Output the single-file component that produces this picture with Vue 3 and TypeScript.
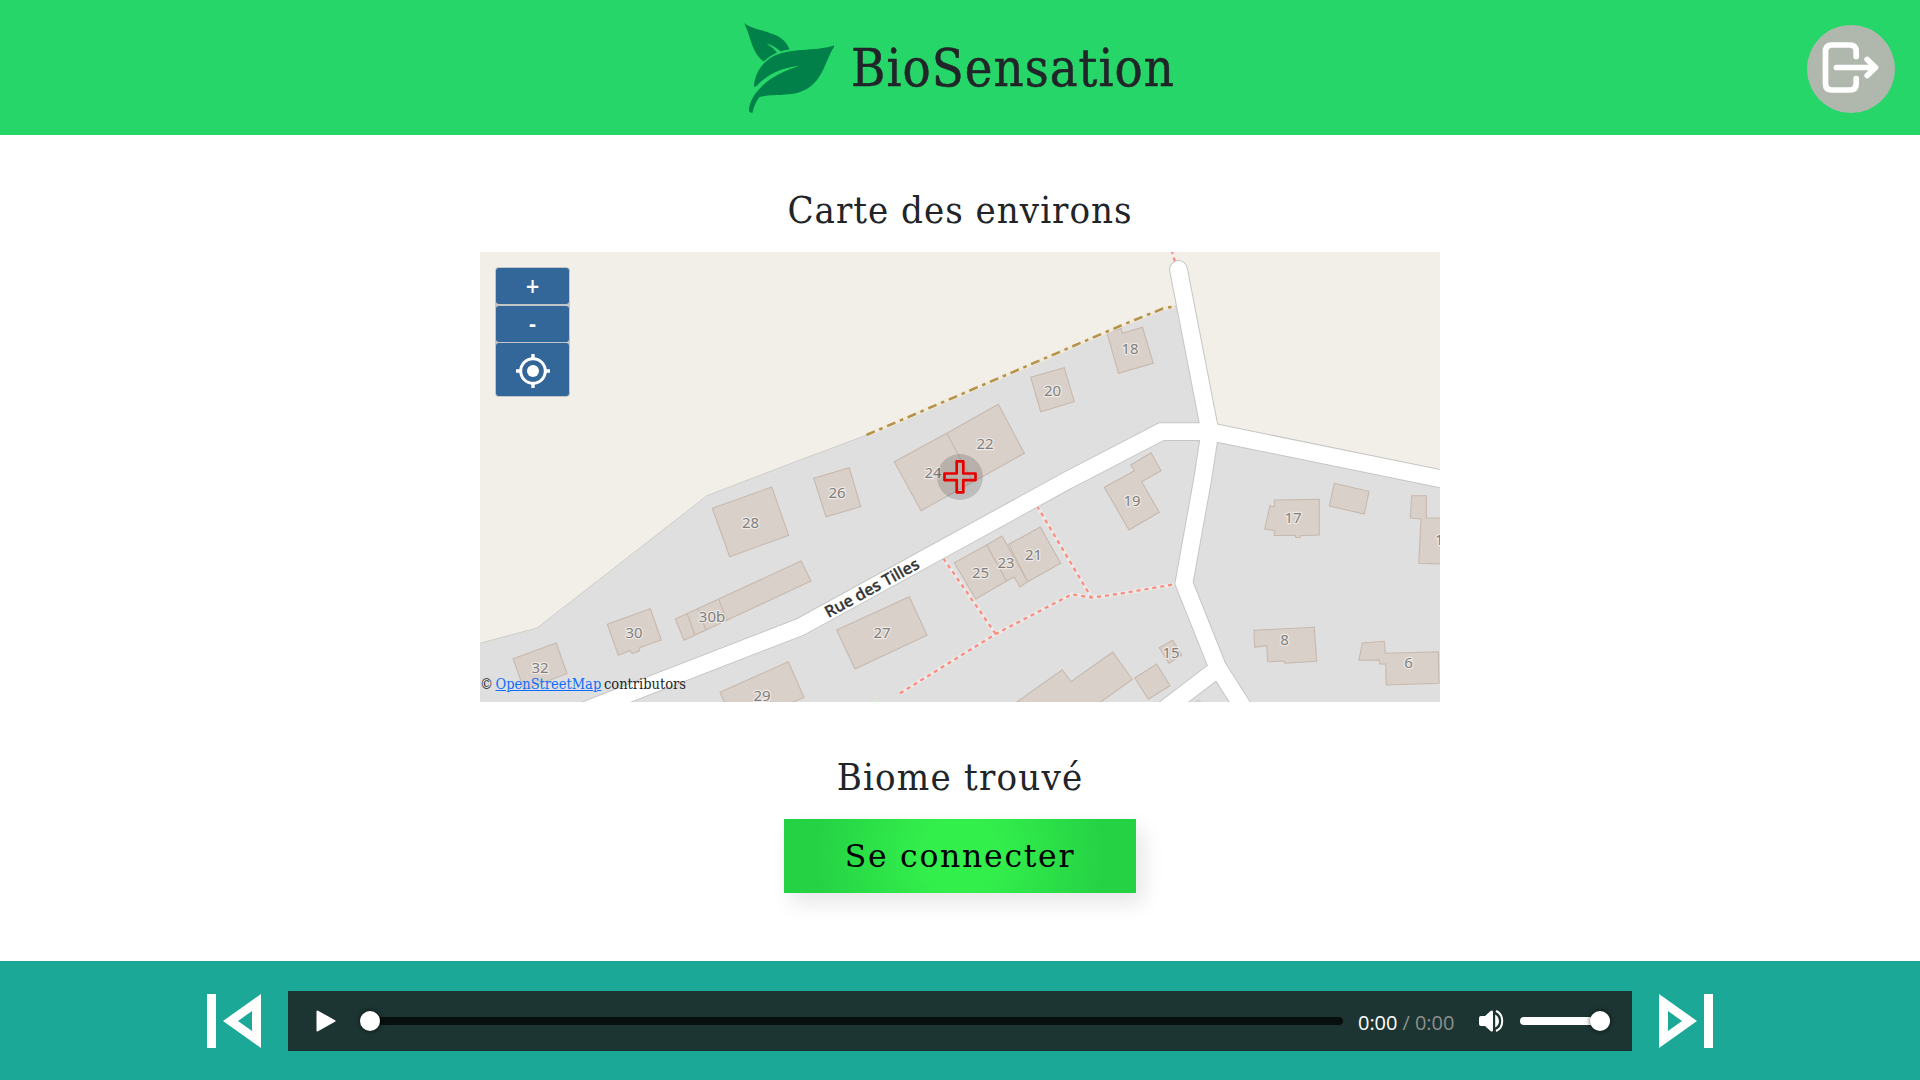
<script setup lang="ts">
interface Label {
  text: string
  x: number
  y: number
}

const buildings: string[] = [
  '1107,333 1121,328.5 1122.5,333.3 1142.5,327.3 1153.3,363.3 1118.5,373.3',
  '1030.7,377.3 1064.3,367.7 1074.3,401.7 1040.7,411.7',
  '894.3,461.7 946.7,433.3 998.3,404.3 1024.3,453.3 921,510.7',
  '813.7,478.3 849.3,467.7 860.7,506.7 826,516.7',
  '712.3,508.3 771.7,487 788.7,535.3 729.7,556.7',
  '607.3,624.3 650.3,608.7 661.3,640 640,647.5 639,651 632.5,653.7 629.5,650.7 618.3,655.3',
  '675.3,619 801,561 811,581 684,640.3',
  '513,658.7 556.3,643 567,673.7 524,689.5',
  '720,692.3 788.3,661.7 804,697.5 788,704 725,704',
  '836.7,630 909.3,596.7 927,635.3 855,669',
  '954.3,562.7 986.7,545 1006.7,581 975.7,599',
  '986.7,545 1002,536 1027.7,581.7 1020,587 1014,577 1006.7,581',
  '1008.7,544.3 1040.3,527 1060.7,563.3 1027.7,581.7',
  '1104.3,487.3 1134.5,470.7 1130.7,465 1151,452.7 1161,470.7 1141.7,481.7 1159.3,512.3 1129,530',
  '1274.3,500 1319.3,499.3 1319.3,535 1300,535.7 1300,537.5 1296,537.5 1295,535.5 1274.3,535.5 1274.3,530.7 1264.7,529 1270,505.7 1274.3,506.7',
  '1334.3,483.3 1369,491.3 1364.3,514 1329.3,506',
  '1411.7,495.7 1426.3,495.7 1426.3,518 1445,518 1445,564 1418.7,563.3 1421,519 1410.3,518',
  '1254,630.3 1314.3,627.3 1316.7,661.3 1285,663.3 1284,661 1267.7,661.7 1266.7,645.7 1254.7,647.3',
  '1362.3,643 1384.3,641.3 1385.3,653.3 1438.3,651.7 1439,683.3 1386.3,685 1385.7,664 1379.7,664 1379,660 1359,660.3',
  '1159.3,647.7 1172.7,640.3 1181.7,655 1169,663.3',
  '1134.7,678 1156.7,664 1170,685.7 1148.3,699.3',
  '1014,704 1062.3,669.7 1071,681.7 1112.7,652 1132.3,679.3 1098,704',
]

const walls = 'M946.7 433.3L973 482M687.3 614L695 635.5M698 609L706 630.5M718.7 599.5L727 620.5'

const roads =
  'M1178.5 269.5L1210 431.7L1202.5 480L1184 583L1217.5 667L1246 712' +
  'M1216 670L1161 712M581 712L800 627L1068.3 480L1161.3 431.7H1210L1450 480.7'

const footpaths =
  'M943.3 558.3L995.7 634M900 693.3L995.7 634L1071.7 594.3L1091.7 597.7L1120 593.7L1174.3 584.3' +
  'M1037 506L1091 597M1171.5 250L1175 262'

const labels: Label[] = [
  { text: '18', x: 1130, y: 354 },
  { text: '20', x: 1052.5, y: 395.5 },
  { text: '22', x: 985, y: 449 },
  { text: '24', x: 933, y: 477.5 },
  { text: '26', x: 837, y: 498 },
  { text: '28', x: 750.5, y: 528 },
  { text: '30', x: 634, y: 638 },
  { text: '30b', x: 712, y: 622 },
  { text: '32', x: 540, y: 672.5 },
  { text: '29', x: 762, y: 700.5 },
  { text: '27', x: 882, y: 638 },
  { text: '25', x: 980.5, y: 578 },
  { text: '23', x: 1006, y: 567.5 },
  { text: '21', x: 1033.5, y: 560 },
  { text: '19', x: 1132, y: 505.5 },
  { text: '17', x: 1293, y: 522.5 },
  { text: '15', x: 1171, y: 657.5 },
  { text: '8', x: 1284.5, y: 644.500 },
  { text: '6', x: 1408.5, y: 668 },
  { text: '13', x: 1443.5, y: 544.5 },
]
</script>

<template>
  <div class="page">
    <header class="top">
      <span class="side"></span>
      <div class="brand">
        <svg class="leaf" viewBox="744 22 92 92" width="92" height="92">
          <g fill="#018049">
            <path d="M744 23C757 33 783 30 789.500 49.500Q785 50 780.500 51.500Q774 45.500 766.500 43.500Q772.500 47 777 52.500Q770 55.500 763.500 61.500C751 52 750 33 744 23Z" />
            <path d="M834 45.500C814 52 790 47 772 57C760 64 754.500 76 754 86.500Q755.500 87.500 757.500 85C770 72 784 67.500 799.500 65.700C783 71 766 79 755.500 93.500C751 100 749 105 749 110.500Q749.500 113.500 752.500 112.700Q754 104 759.500 97C775 93 794 98 809 87.500C824 77 826 59 834 47Z" />
          </g>
        </svg>
        <h1>BioSensation</h1>
      </div>
      <button class="logout" aria-label="Déconnexion">
        <svg viewBox="0 0 88 88" width="88" height="88" fill="none" stroke="#fff" stroke-width="5.700" stroke-linecap="round" stroke-linejoin="round">
          <path d="M49.200 31.500V26.500Q49.200 20 42.700 20H25Q18.500 20 18.500 26.500V58.500Q18.500 65 25 65H42.700Q49.200 65 49.200 58.500V53.500" />
          <path d="M29.500 42.500H68M60.200 34.500L68.500 42.500L60.200 50.500" />
        </svg>
      </button>
    </header>

    <main>
      <h2 class="map-title">Carte des environs</h2>
      <section class="map">
        <svg class="tiles" viewBox="480 252 960 450" width="960" height="450">
          <rect x="480" y="252" width="960" height="450" fill="#dfdfdf" />
          <path d="M479 643.500L537 628L707 495.700L800 460L867 435L1120 326L1168 307L1176 306L1210 432L1441 478V251H479Z" fill="#f2efe8" stroke="#cfcecb" stroke-width="1" />
          <g fill="#d9d0c9" stroke="#c7b9ae" stroke-width="1.100">
            <polygon v-for="shape in buildings" :key="shape" :points="shape" />
            <path :d="walls" />
          </g>
          <path d="M1191 704L1199 699L1203 704" fill="#d0d0d0" />
          <path d="M873 702Q876 699 879 702Z" fill="#c8facc" />
          <path :d="footpaths" fill="none" stroke="#efeceb" stroke-width="4" stroke-linejoin="round" stroke-opacity=".7" />
          <path :d="footpaths" fill="none" stroke="#fa8b7f" stroke-width="2.200" stroke-dasharray="4 4" />
          <path d="M866.500 435L1120 326L1163 308.500L1174 306.500" fill="none" stroke="#f1ebdc" stroke-width="4" />
          <path d="M866.500 435L1120 326L1163 308.500L1174 306.500" fill="none" stroke="#b5924a" stroke-width="2.500" stroke-dasharray="9 4.900 3.600 4.900" />
          <path :d="roads" fill="none" stroke="#c6c6c4" stroke-width="18.800" stroke-linecap="round" />
          <path :d="roads" fill="none" stroke="#fff" stroke-width="16.800" stroke-linecap="round" />
          <g class="numbers">
            <text v-for="l in labels" :key="l.text" :x="l.x" :y="l.y">{{ l.text }}</text>
          </g>
          <text class="street" transform="translate(828.500 618) rotate(-28.700)" textLength="105" lengthAdjust="spacingAndGlyphs">Rue des Tilles</text>
          <circle cx="960" cy="477" r="23" fill="#000" fill-opacity=".15" />
          <path d="M956.700 461.300H963.300V473.500H975.500V480.100H963.300V492.300H956.700V480.100H944.500V473.500H956.700Z" fill="none" stroke="#e60000" stroke-width="2.700" stroke-linejoin="round" />
        </svg>
        <div class="controls">
          <button>+</button>
          <button class="minus">-</button>
          <button class="locate" aria-label="Localiser">
            <svg viewBox="0 0 34 34" width="34" height="34" fill="none" stroke="#fff">
              <circle cx="17" cy="17" r="12.300" stroke-width="3" />
              <circle cx="17" cy="17" r="6" fill="#fff" stroke="none" />
              <path d="M17 0V5M17 29V34M0 17H5M29 17H34" stroke-width="3.400" />
            </svg>
          </button>
        </div>
        <p class="credit"><span class="c">©</span><a>OpenStreetMap</a><span class="by">contributors</span></p>
      </section>
      <h2 class="biome">Biome trouvé</h2>
      <button class="connect">Se connecter</button>
    </main>

    <footer>
      <svg class="skip" viewBox="0 0 54 54" width="54" height="54" fill="#fff">
        <path fill-rule="evenodd" d="M0 0H9V54H0ZM54 0V54L16 27ZM45 17L31 27L45 37Z" />
      </svg>
      <div class="player">
        <svg class="play" viewBox="0 0 20 22" width="20" height="22">
          <path d="M1.500 1.500L18.500 11L1.500 20.500Z" fill="#fff" stroke="#fff" stroke-width="2" stroke-linejoin="round" />
        </svg>
        <div class="seek"><i class="knob"></i></div>
        <div class="time">0:00 <span>/ 0:00</span></div>
        <svg class="speaker" viewBox="0 0 25 22" width="25" height="22">
          <path d="M0 8Q0 6 2 6H6L11.500 1Q14 -.5 14 2V20Q14 22.500 11.500 21L6 16H2Q0 16 0 14Z" fill="#fff" />
          <path d="M16.200 4.500Q20 7 20 11Q20 15 16.200 17.500Z" fill="#fff" />
          <path d="M17 1C25.300 4.500 25.300 17.500 17 21" fill="none" stroke="#fff" stroke-width="2" />
        </svg>
        <div class="volume"><i class="knob"></i></div>
      </div>
      <svg class="skip" viewBox="0 0 54 54" width="54" height="54" fill="#fff">
        <path fill-rule="evenodd" d="M45 0H54V54H45ZM0 0V54L38 27ZM9 17L23 27L9 37Z" />
      </svg>
    </footer>
  </div>
</template>

<style>
body {
  margin: 0;
  overflow: hidden;
}
</style>

<style scoped>
.page {
  display: flex;
  flex-direction: column;
  width: 1920px;
  height: 1080px;
  background: #fff;
  color: #212529;
  font-family: "DejaVu Serif Condensed", "DejaVu Serif", serif;
  font-stretch: condensed;
  white-space: nowrap;
}
button {
  border: 0;
  padding: 0;
  font: inherit;
  font-stretch: condensed;
}
svg {
  display: block;
  flex: none;
}
h1,
h2,
p {
  margin: 0;
  font-weight: 400;
}
.top {
  display: flex;
  align-items: center;
  justify-content: space-between;
  box-sizing: border-box;
  height: 135px;
  padding: 0 25px;
  background: #27d668;
}
.side {
  width: 88px;
}
.brand {
  display: flex;
  align-items: center;
  gap: 15px;
  width: 432px;
}
h1 {
  font-size: 52px;
  line-height: 60px;
  letter-spacing: 1.05px;
  -webkit-text-stroke: 0.5px #212529;
}
.logout {
  width: 88px;
  height: 88px;
  margin-top: 2px;
  border-radius: 50%;
  background: #b0b8ae;
}
main {
  display: flex;
  flex-direction: column;
  align-items: center;
  height: 826px;
}
h2 {
  height: 48px;
  font-size: 38px;
  line-height: 48px;
  letter-spacing: 1px;
}
.map-title {
  margin: 51px 0 18px;
}
.map {
  position: relative;
  width: 960px;
  height: 450px;
  overflow: hidden;
}
.numbers {
  font: 15px "Noto Sans", sans-serif;
  fill: #808080;
  text-anchor: middle;
  stroke: #eee8e4;
  stroke-width: 2.5px;
  stroke-linejoin: round;
  paint-order: stroke;
}
.street {
  font: 500 16px "Noto Sans", sans-serif;
  fill: #333;
  stroke: #333;
  stroke-width: 0.35px;
}
.controls {
  position: absolute;
  top: 15px;
  left: 15px;
  display: flex;
  flex-direction: column;
  gap: 2px;
  width: 73px;
  padding: 1px;
  border-radius: 4px;
  background: #c3c6c6;
}
.controls button {
  height: 36px;
  border-radius: 3px;
  background: #369;
  color: #fff;
  font-size: 20px;
  font-weight: 700;
  line-height: 36px;
}
.controls .locate {
  display: flex;
  align-items: center;
  justify-content: center;
  height: 53px;
  margin-top: -1px;
  padding-top: 3px;
  box-sizing: border-box;
}
.credit {
  position: absolute;
  left: 0;
  bottom: 8px;
  display: flex;
  font-size: 14.5px;
  line-height: 20px;
}
.c {
  width: 15.5px;
}
.credit a {
  width: 105px;
  margin-right: 3.5px;
  color: #0d6efd;
  text-decoration: underline;
}
.biome {
  margin: 51px 0 18px;
  letter-spacing: 1.2px;
}
.connect {
  width: 352px;
  height: 74px;
  background: radial-gradient(circle, #33ef4c 20%, #25d244 80%);
  box-shadow: 7px 10px 20px rgba(0, 0, 0, 0.1);
  color: #000;
  font-family: "DejaVu Serif", serif;
  font-size: 31.5px;
  font-stretch: normal;
  letter-spacing: 1.7px;
  line-height: 72px;
}
footer {
  display: flex;
  align-items: center;
  justify-content: center;
  gap: 27px;
  height: 119px;
  background: #1ba897;
}
.player {
  display: flex;
  align-items: center;
  box-sizing: border-box;
  width: 1344px;
  height: 60px;
  padding-left: 28px;
  background: #1c3532;
}
.seek,
.volume {
  display: flex;
  align-items: center;
  height: 8px;
  border-radius: 4px;
}
.seek {
  width: 983px;
  margin-left: 24px;
  background: linear-gradient(90deg, transparent 10px, #08100f 10px);
}
.volume {
  justify-content: flex-end;
  width: 90px;
  margin-left: 16px;
  background: #fff;
}
.knob {
  width: 20px;
  height: 20px;
  border-radius: 50%;
  background: #fff;
  box-shadow: 0 0 5px rgba(0, 0, 0, 0.7);
}
.time {
  width: 121px;
  margin: 4px 0 0 15px;
  color: #fff;
  font: 20px/24px "Open Sans", sans-serif;
  letter-spacing: -0.05px;
}
.time span {
  color: #8b8f8d;
}
</style>
